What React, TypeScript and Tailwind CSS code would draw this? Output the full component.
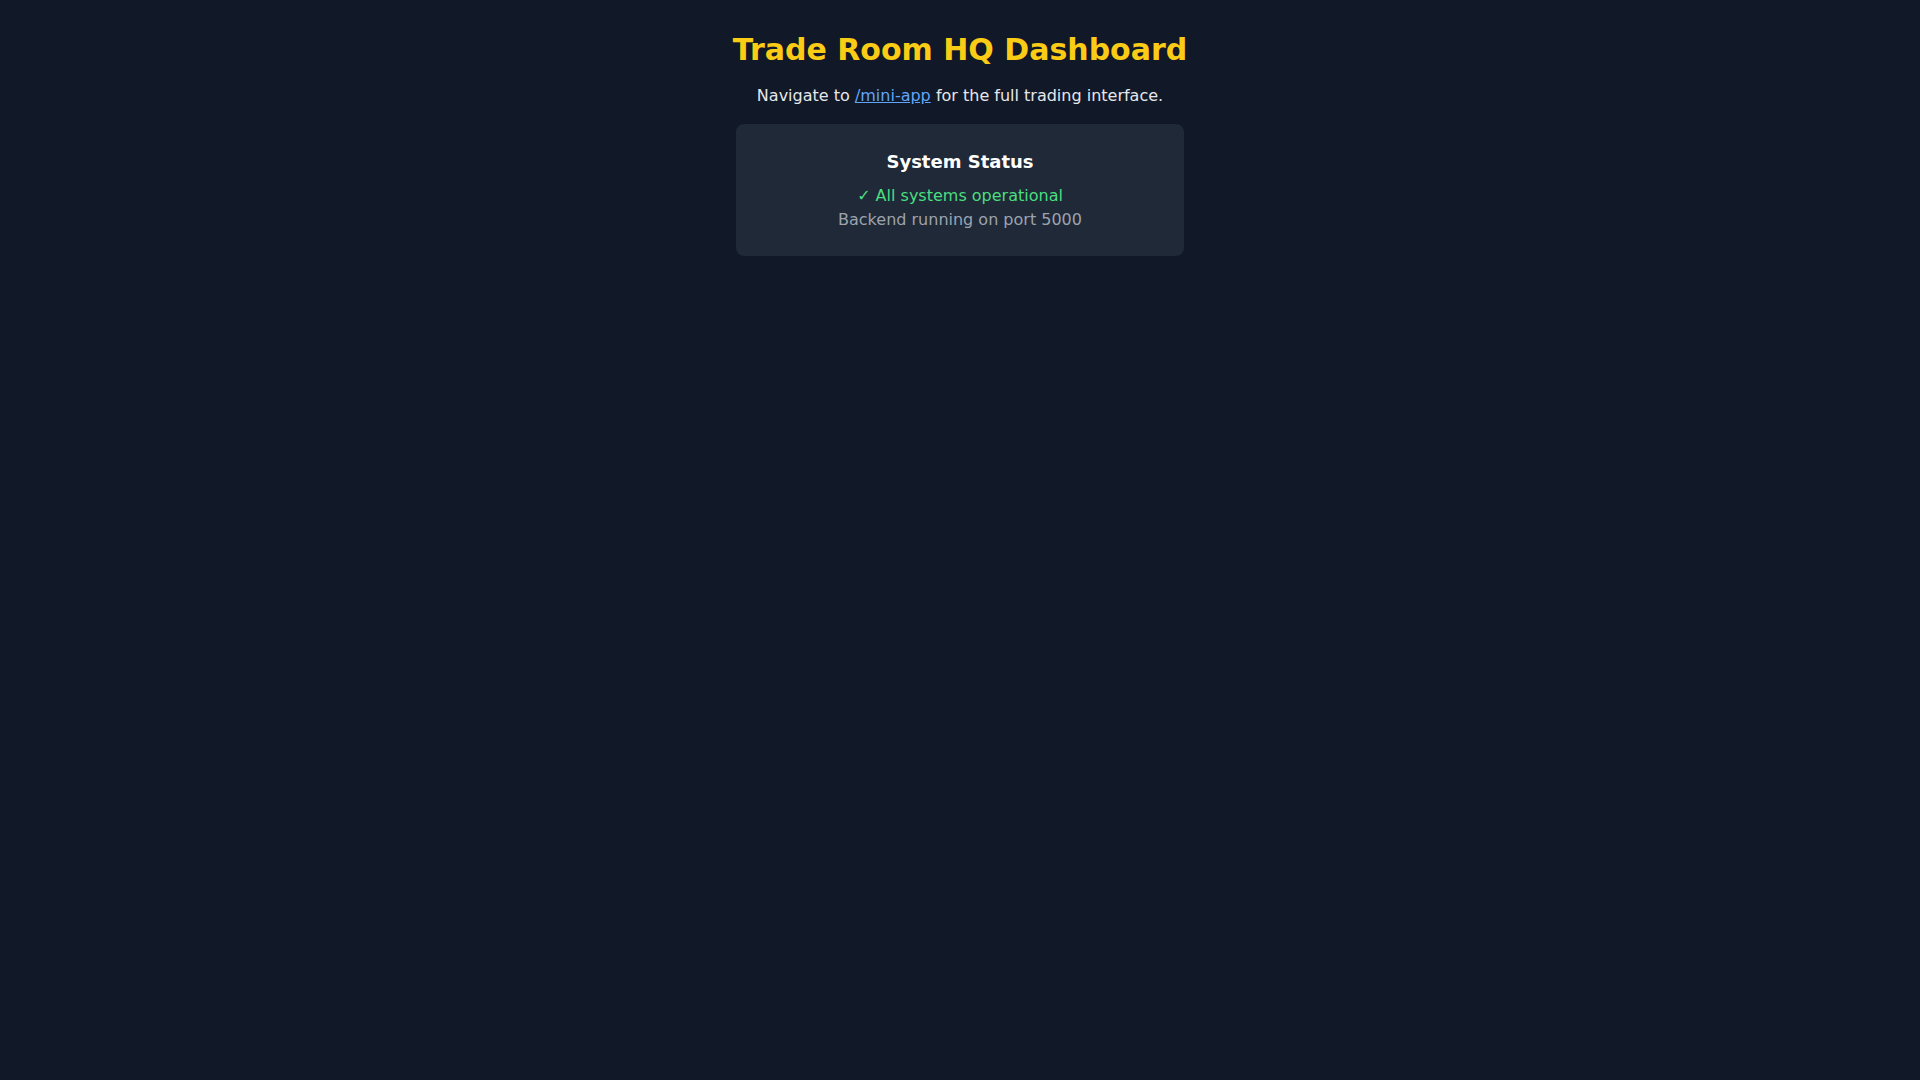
export default function App() {
  return (
    <div className="min-h-screen bg-[#111827] p-8 text-center" style={{ fontFamily: '"DejaVu Sans", sans-serif' }}>
      <h1 className="mb-4 text-3xl font-bold text-[#facc15]">Trade Room HQ Dashboard</h1>
      <p className="mb-4 text-base text-[#e5e7eb]">
        Navigate to{" "}
        <a href="#" className="text-[#60a5fa] underline">
          /mini-app
        </a>{" "}
        for the full trading interface.
      </p>
      <div className="mx-auto max-w-md rounded-lg bg-[#1f2937] p-6">
        <h2 className="mb-2 text-lg font-semibold text-white">System Status</h2>
        <p className="text-[#4ade80]">✓ All systems operational</p>
        <p className="text-[#9ca3af]">Backend running on port 5000</p>
      </div>
    </div>
  );
}
